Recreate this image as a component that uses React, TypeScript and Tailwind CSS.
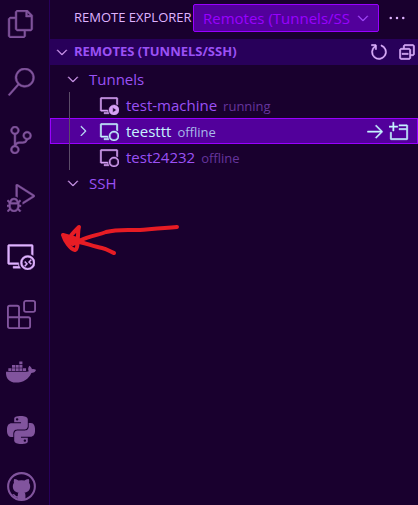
import type { ReactNode } from 'react';
import {
  VscFiles, VscSearch, VscSourceControl, VscDebugAlt, VscRemoteExplorer,
  VscChevronDown, VscChevronRight, VscRefresh, VscCollapseAll, VscEllipsis,
  VscVmOutline, VscVmRunning, VscArrowRight, VscEmptyWindow,
} from 'react-icons/vsc';
import { FaDocker } from 'react-icons/fa';
import { SiPython } from 'react-icons/si';

type IconProps = { className?: string };

function ExtensionsIcon({ className }: IconProps) {
  return (
    <svg viewBox="0 0 28 28" className={className} fill="none" stroke="currentColor" strokeWidth="1.8" strokeLinejoin="round">
      <rect x="16.5" y="0.9" width="10.6" height="10.6" rx="1.8" />
      <path d="M2.7 5.5H9.8Q11.6 5.5 11.6 7.3V16.6H20.5Q22.3 16.6 22.3 18.4V25.3Q22.3 27.1 20.5 27.1H2.7Q0.9 27.1 0.9 25.3V7.3Q0.9 5.5 2.7 5.5ZM0.9 16.6H11.6V27.1" />
    </svg>
  );
}

function GithubIcon({ className }: IconProps) {
  return (
    <svg viewBox="0 0 28 28" className={className} fill="none">
      <circle cx="14" cy="14" r="12.9" stroke="currentColor" strokeWidth="2" />
      <path
        fill="currentColor"
        d="M7 6.8C8.5 6.6 10 7.5 11 8.3Q14 7.6 17 8.3C18 7.5 19.5 6.6 21 6.8Q21.8 8.7 21.3 10.3Q22.6 12 22.4 14.2C22.1 17.8 20 19.4 16.9 19.9Q17.8 20.8 17.8 22.4V27H10.3V24.8C7.6 25.2 6.9 24 6.2 22.8Q5.7 21.8 4.9 21.3C6.7 20.7 7.6 21.8 8.2 22.7Q9 23.7 10.4 23.1Q10.3 20.9 11.1 19.9C8 19.4 5.9 17.8 5.6 14.2Q5.4 12 6.7 10.3Q6.2 8.7 7 6.8Z"
      />
    </svg>
  );
}

const activities = [
  { label: 'Explorer', Icon: VscFiles },
  { label: 'Search', Icon: VscSearch },
  { label: 'Source Control', Icon: VscSourceControl },
  { label: 'Run and Debug', Icon: VscDebugAlt },
  { label: 'Remote Explorer', Icon: VscRemoteExplorer, active: true },
  { label: 'Extensions', Icon: ExtensionsIcon },
  { label: 'Docker', Icon: FaDocker },
  { label: 'Python', Icon: SiPython },
  { label: 'GitHub', Icon: GithubIcon, last: true },
];

function ActivityBar() {
  return (
    <nav aria-label="Activity bar" className="flex w-[50px] shrink-0 flex-col overflow-hidden border-r border-[#28005a] pr-[7px]">
      {activities.map(({ label, Icon, active, last }) => (
        <button
          key={label}
          aria-label={label}
          className={`flex shrink-0 items-center justify-center pb-[10px] ${last ? 'h-[54px]' : 'h-[58px]'} ${
            active ? 'stroke-[0.4] text-[#dfb2ff]' : 'text-[#81549d]'
          }`}
        >
          <Icon className={label === 'Docker' ? 'size-[30px]' : label === 'Extensions' || last ? 'size-[29px]' : label === 'Python' ? 'size-7' : 'size-7 stroke-[0.4]'} />
        </button>
      ))}
    </nav>
  );
}

function Group({ name, children }: { name: string; children?: ReactNode }) {
  return (
    <li>
      <button className="flex h-[26px] w-full items-center gap-2 pl-[15px] text-[#9b51f5]">
        <VscChevronDown className="size-4 stroke-[0.4] text-[#d6a0f5]" />
        {name}
      </button>
      {children}
    </li>
  );
}

function Machine({ name, status, running, selected }: { name: string; status: string; running?: boolean; selected?: boolean }) {
  const Icon = running ? VscVmRunning : VscVmOutline;
  return (
    <li
      className={`flex h-[26px] items-center border pr-2 ${
        selected ? 'border-[#9900ff] bg-[#52009b] text-[#c5f4ff]' : 'border-transparent text-[#9b51f5]'
      }`}
    >
      <span className="flex w-12 shrink-0 pl-6">{selected && <VscChevronRight className="size-4 stroke-[0.4]" />}</span>
      <Icon className={`size-5 shrink-0 stroke-[0.4] ${selected ? '' : 'text-[#d6a0f5]'}`} />
      <span className="flex flex-1 items-baseline gap-[6px] pl-[7px]">
        {name}
        <span className={`text-[13px] ${selected ? 'font-medium text-[#a9b8ea]' : 'text-[#66359d]'}`}>{status}</span>
      </span>
      {selected && (
        <span className="flex items-center gap-1">
          <button aria-label="Connect in current window"><VscArrowRight className="size-5 stroke-[0.4]" /></button>
          <button aria-label="Connect in new window"><VscEmptyWindow className="size-5 stroke-[0.4]" /></button>
        </span>
      )}
    </li>
  );
}

export default function App() {
  return (
    <div className="relative flex h-screen overflow-hidden bg-[#19002e] font-['Open_Sans','Noto_Sans',sans-serif] text-[15px]">
      <ActivityBar />
      <main className="min-w-0 flex-1">
        <header className="flex h-[39px] items-center pb-[3px] pl-6 pr-[11px]">
          <h1 className="w-[119px] shrink-0 whitespace-nowrap text-[13px] text-[#dfb2ff]">REMOTE EXPLORER</h1>
          <div className="relative min-w-0 flex-1">
            <select
              aria-label="Remote type"
              className="block h-7 w-full appearance-none rounded-xs border border-[#9900ff] bg-[#52009b] pl-[9px] pr-7 text-[#9900ff]"
            >
              <option>Remotes (Tunnels/SSH)</option>
            </select>
            <VscChevronDown className="pointer-events-none absolute right-2 top-1.5 size-4 stroke-[0.4] text-[#a64dff]" />
          </div>
          <button aria-label="More actions" className="ml-2 text-[#dfb2ff]"><VscEllipsis className="size-5" /></button>
        </header>
        <div className="flex h-[26px] items-center gap-2 bg-[#28005a] pl-1 pr-px">
          <button className="flex flex-1 items-center gap-1 text-[13px] font-bold text-[#9b51f5]">
            <VscChevronDown className="size-4 stroke-[0.4] text-[#d6a0f5]" />
            REMOTES (TUNNELS/SSH)
          </button>
          <button aria-label="Refresh" className="text-[#dfb2ff]"><VscRefresh className="size-5 stroke-[0.4]" /></button>
          <button aria-label="Collapse all" className="text-[#dfb2ff]"><VscCollapseAll className="size-5 stroke-[0.4]" /></button>
        </div>
        <ul className="pt-px">
          <Group name="Tunnels">
            <ul className="relative">
              <Machine name="test-machine" status="running" running />
              <Machine name="teesttt" status="offline" selected />
              <Machine name="test24232" status="offline" />
              <li aria-hidden="true" className="absolute inset-y-0 left-[19px] w-px bg-[#5b4c68]" />
            </ul>
          </Group>
          <Group name="SSH" />
        </ul>
      </main>
      <svg
        aria-hidden="true"
        viewBox="0 0 120 34"
        className="pointer-events-none absolute left-[60px] top-[223px] h-[34px] w-[120px] fill-none stroke-[#e71c24] stroke-[4] [stroke-linecap:round] [stroke-linejoin:round]"
      >
        <path d="M117 4C103 5 92 6 80 7C65 7 57 6 46 9C38 12 30 13 21 17L13 21C8 18 5 14 3 12C5 18 10 26 15 27C19 26 17 11 19 4C14 9 6 17 9 19C18 16 30 23 42 25C47 26 51 29 54 30M3 12L17 16" />
      </svg>
    </div>
  );
}
